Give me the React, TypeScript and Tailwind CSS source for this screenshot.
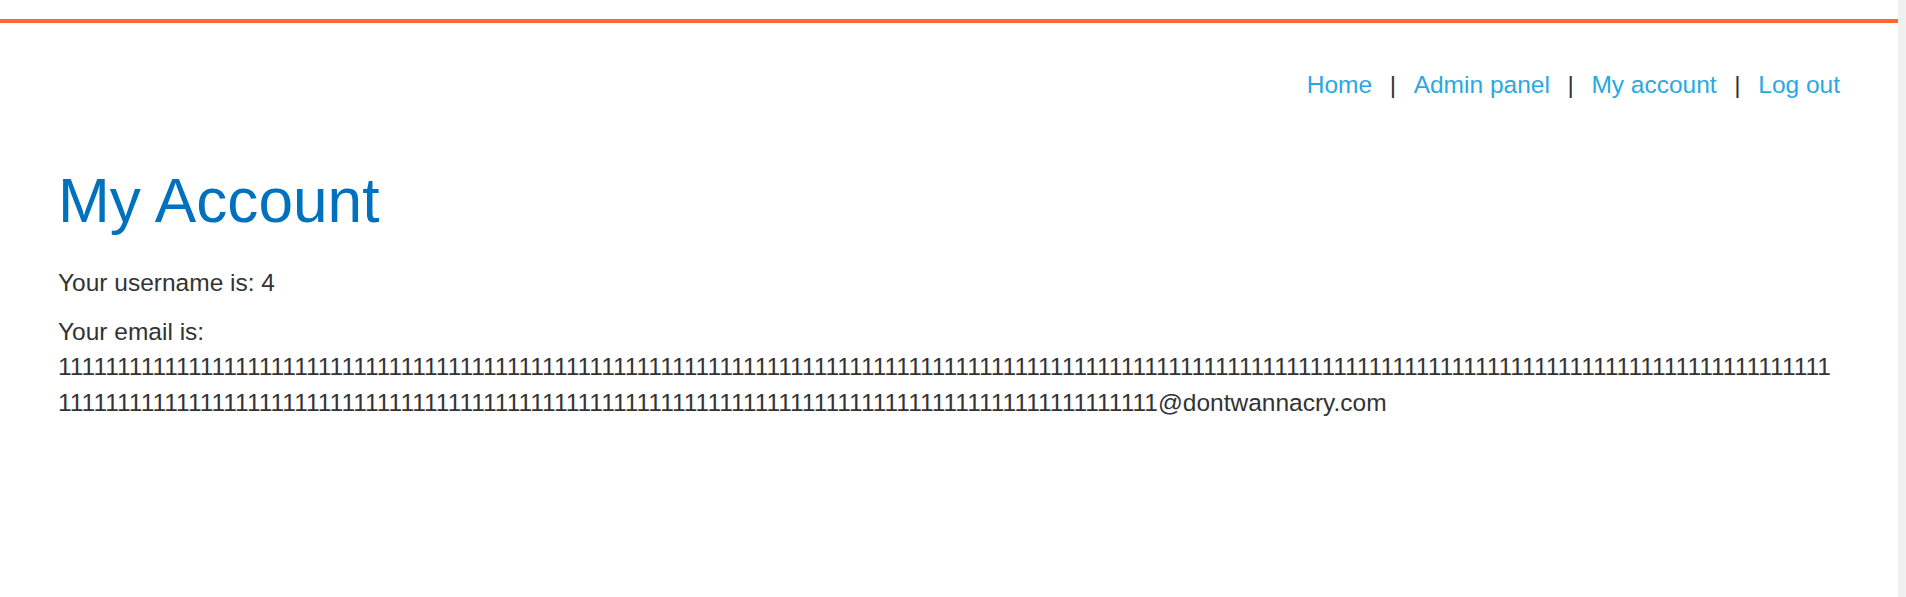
import React from 'react';

// Header navigation links
const NAV_LINKS = ['Home', 'Admin panel', 'My account', 'Log out'];

const EMAIL = '1'.repeat(243) + '@dontwannacry.com';

const App: React.FC = () => {
    return (
        <div className="flex h-[597px] w-full bg-white font-['Liberation_Sans',Arial,sans-serif] text-[24.5px] leading-[35.5px] text-[#333333]">
            <div className="flex min-w-0 flex-1 flex-col">
                {/* Top accent bar */}
                <div className="mt-[19px] h-[4px] w-full bg-[#ff6633]" />

                <div className="px-[58px]">
                    {/* Navigation */}
                    <nav className="mt-[44px] flex justify-end">
                        {NAV_LINKS.map((link, index) => (
                            <React.Fragment key={link}>
                                {index > 0 && <span className="mx-[17.6px]">|</span>}
                                <a href="#" className="text-[#29a8e2] no-underline">
                                    {link}
                                </a>
                            </React.Fragment>
                        ))}
                    </nav>

                    {/* Account details */}
                    <h1 className="mt-[61px] text-[62.2px] leading-[73.8px] font-normal text-[#0071bc]">
                        My Account
                    </h1>
                    <p className="mt-[28px]">Your username is: 4</p>
                    <p className="mt-[13px] break-words">
                        Your email is: <span>{EMAIL}</span>
                    </p>
                </div>
            </div>

            {/* Scrollbar strip */}
            <div className="h-full w-[8px] shrink-0 bg-[#f0f0f0]" />
        </div>
    );
};

export default App;
